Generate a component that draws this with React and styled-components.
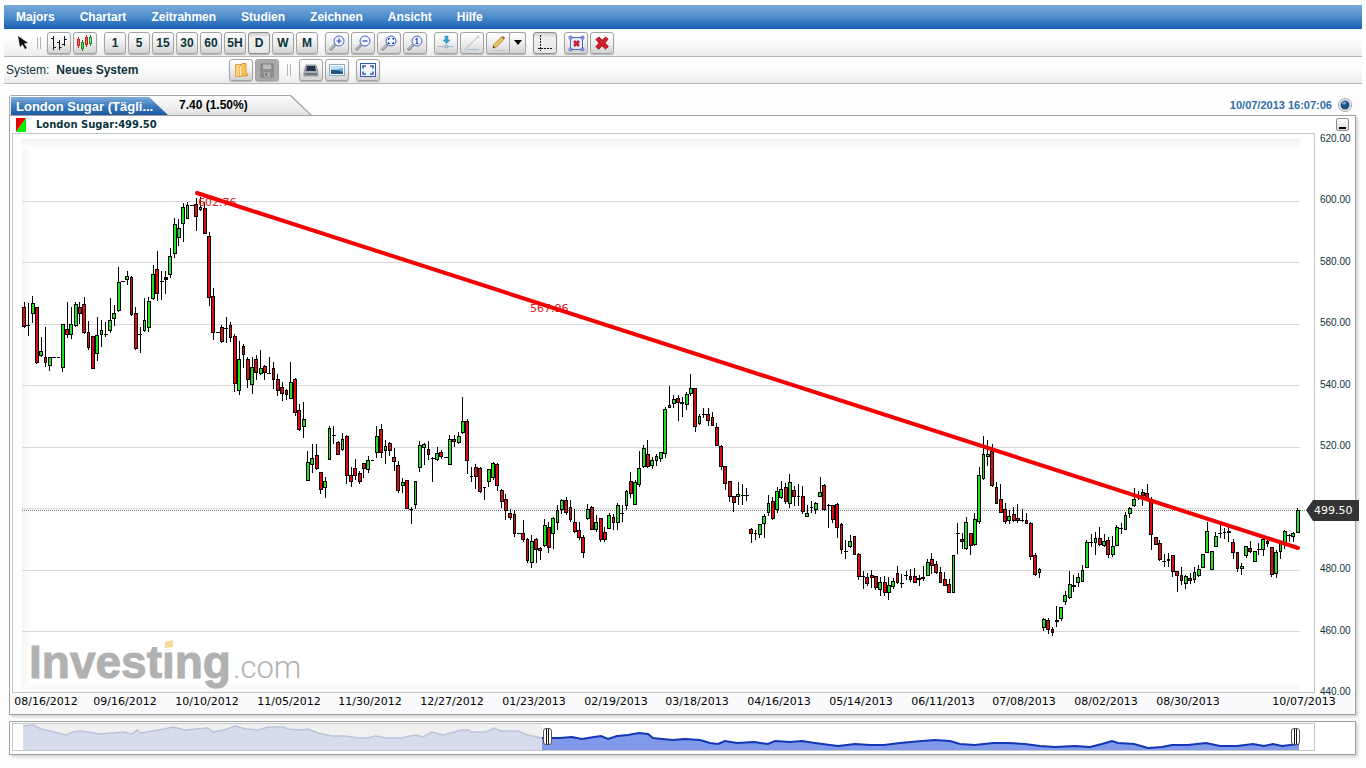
import React, { useState } from "react";
import styled, { createGlobalStyle } from "styled-components";

const GlobalStyle = createGlobalStyle`
  body {
    margin: 0;
    background: #fefefe;
    font-family: "Liberation Sans", Arial, sans-serif;
    font-size: 12px;
    color: #0b333c;
  }
  * {
    box-sizing: border-box;
  }
`;

const Page = styled.div`
  padding: 5px 4px;
`;

const Menu = styled.nav`
  display: flex;
  align-items: center;
  gap: 25px;
  height: 24px;
  padding-left: 12px;
  background: linear-gradient(#7cabda, #4d8bcb 50%, #1860b4);
`;

const MenuLink = styled.a`
  color: white;
  font-weight: bold;
  text-decoration: none;
`;

const Toolbar = styled.div`
  display: flex;
  align-items: center;
  gap: 7px;
  height: 28px;
  border-bottom: 1px solid #b5b5b5;
  background: linear-gradient(#ffffff, #fbfbfb 50%, #ececec);
`;

const SystemBar = styled(Toolbar)`
  height: 27px;
`;

const Group = styled.div`
  display: flex;
  gap: 2px;
`;

const Pointer = styled.button`
  display: flex;
  justify-content: flex-end;
  width: 26px;
  padding: 0;
  border: none;
  background: none;
`;

const Separator = styled.span`
  width: 4px;
  height: 12px;
  margin-right: -1px;
  border: 1px solid #b4b4b4;
  border-width: 0 1px;

  ${SystemBar} & {
    margin: 0 1px;
  }
`;

const ToolButton = styled.button`
  display: flex;
  align-items: center;
  justify-content: center;
  width: ${(props) => props.$width || 24}px;
  height: 22px;
  padding: 0;
  border: 1px solid ${(props) => (props.$active ? "#8d8d8d" : "#a3a3a3")};
  border-radius: 3px;
  background: ${(props) =>
    props.disabled
      ? "#a9a9a9"
      : props.$active
        ? "linear-gradient(#d2d2d2, #f0f0f0 25%, #e6e6e6)"
        : "linear-gradient(#ffffff, #eeeeee 50%, #d3d3d3)"};
  box-shadow: 0 1px 1px rgba(0, 0, 0, 0.25);
  font: bold 12px "Liberation Sans", Arial, sans-serif;
  color: #0b333c;
`;

const SplitButton = styled.div`
  display: flex;

  button:first-child {
    border-radius: 3px 0 0 3px;
  }
  button:last-child {
    border-left: none;
    border-radius: 0 3px 3px 0;
  }
`;

const SystemName = styled.div`
  display: flex;
  gap: 7px;
  width: 218px;
  padding-left: 2px;
`;

const Content = styled.main`
  margin: 11px 6px 0 5px;
`;

const TabRow = styled.div`
  display: flex;
  align-items: flex-end;
  justify-content: space-between;
  height: 20px;
`;

const TabFrame = styled.div`
  width: 303px;
  height: 20px;
  padding: 1px 1px 0;
  background: #a8a8a8;
  clip-path: polygon(0 2px, 2px 0, 282px 0, 100% 100%, 0 100%);
`;

const Tabs = styled.div`
  display: flex;
  height: 19px;
  padding: 1px 0 0 1px;
  background: linear-gradient(#fdfdfd, #e2e2e2);
  clip-path: polygon(0 0, 280px 0, 300px 100%, 0 100%);
`;

const Tab = styled.button`
  width: 157px;
  padding: 0 0 0 5px;
  border: none;
  background: linear-gradient(#7fabda, #3d7cbd 50%, #1b599f);
  clip-path: polygon(0 0, 138px 0, 100% 100%, 0 100%);
  color: white;
  font: bold 13px "Liberation Sans", Arial, sans-serif;
  text-align: left;
`;

const Change = styled.span`
  padding: 1px 0 0 11px;
  color: black;
  font-weight: bold;
`;

const Clock = styled.div`
  display: flex;
  align-items: center;
  gap: 6px;
  height: 20px;
  padding-right: 4px;
  color: #2f6ca8;
  font-size: 11px;
  font-weight: bold;
`;

const Panel = styled.section`
  border: 1px solid #a0a0a0;
  background: white;
  box-shadow: 2px 2px 3px rgba(0, 0, 0, 0.18);
`;

const ChartPanel = styled(Panel)`
  border-top: none;
`;

const Legend = styled.div`
  display: flex;
  align-items: center;
  gap: 10px;
  height: 18px;
  padding: 0 6px;
  border-top: 1px solid #a0a0a0;
  font: bold 10px "DejaVu Sans", Verdana, sans-serif;
`;

const MinimizeButton = styled.button`
  width: 13px;
  height: 13px;
  margin-left: auto;
  padding: 7px 2px 0;
  border: 1px solid #8e8e8e;
  border-radius: 2px;
  background: linear-gradient(#ffffff, #dddddd);

  &::before {
    content: "";
    display: block;
    height: 2px;
    background: black;
  }
`;

const Drawing = styled.svg`
  display: block;
  width: 100%;
  height: auto;
  overflow: visible;
`;

const Navigator = styled(Panel)`
  position: relative;
  margin-top: 6px;
`;

const Handle = styled.input`
  position: absolute;
  top: 0;
  left: 0;
  width: 100%;
  height: 28px;
  margin: 0;
  background: none;
  appearance: none;
  pointer-events: none;

  &::-webkit-slider-thumb {
    width: 9px;
    height: 17px;
    border: 1px solid #555555;
    border-radius: 3px;
    background: linear-gradient(
      to right,
      #ffffff 2px,
      #111111 2px 3px,
      #ffffff 3px 4px,
      #111111 4px 5px,
      #ffffff 5px
    );
    appearance: none;
    pointer-events: auto;
  }
`;

const menuItems = [
  "Majors",
  "Chartart",
  "Zeitrahmen",
  "Studien",
  "Zeichnen",
  "Ansicht",
  "Hilfe",
];

const periods = ["1", "5", "15", "30", "60", "5H", "D", "W", "M"];

const prices = [620, 600, 580, 560, 540, 520, 500, 480, 460, 440];

const dates = [
  [46, "08/16/2012"],
  [125, "09/16/2012"],
  [207, "10/10/2012"],
  [289, "11/05/2012"],
  [370, "11/30/2012"],
  [452, "12/27/2012"],
  [534, "01/23/2013"],
  [616, "02/19/2013"],
  [697, "03/18/2013"],
  [779, "04/16/2013"],
  [861, "05/14/2013"],
  [943, "06/11/2013"],
  [1024, "07/08/2013"],
  [1106, "08/02/2013"],
  [1188, "08/30/2013"],
  [1304, "10/07/2013"],
];

// one bar per trading day: r = falling, g = rising, d = unchanged
// then wick top, body top, body bottom, wick bottom
const bars = `
r302,307,326,327 d303,325,325,335 g296,303,313,322 r307,307,362,363 g337,351,355,356
r327,357,362,366 g357,357,365,370 d357,357,357,357 d357,357,357,357 g324,324,367,371
r302,329,334,337 g307,324,334,338 g302,304,325,326 r302,307,313,323 r297,304,332,333
r321,332,347,349 r336,336,368,368 g317,335,353,360 g320,330,334,346 d322,334,334,336
g298,320,330,332 g305,313,318,325 g267,282,310,311 d281,281,281,281 g271,276,279,284
r276,277,314,315 r307,313,348,349 d327,334,334,352 g298,320,330,331 g297,301,327,331
g265,274,298,299 r251,269,293,300 d271,281,281,299 d271,277,279,293 g248,256,274,277
g218,224,253,257 g219,228,237,245 g203,207,223,241 g202,205,218,218 d205,205,205,205
r198,204,216,230 g197,207,209,210 r202,208,233,233 r232,236,297,305 r288,296,332,339
d332,332,332,332 r325,327,341,342 d317,328,328,342 r322,325,337,341 r334,336,383,391
g341,359,390,394 r344,346,354,367 r357,359,379,387 g357,367,384,393 r355,359,372,379
g350,368,373,374 r365,366,372,379 d357,373,373,373 r362,368,379,388 r374,379,390,395
r382,387,393,400 r389,390,394,399 g362,382,398,398 r378,379,412,415 r404,410,429,430
g402,419,426,437 g451,462,480,480 g444,458,464,472 r444,455,468,469 r472,472,489,493
g477,481,487,497 g426,428,459,459 d426,435,435,443 r441,442,454,454 g433,439,449,450
r435,436,475,483 r467,475,481,486 r459,468,475,479 r471,473,481,483 r463,463,468,477
g456,460,469,472 d460,460,460,460 g426,436,452,457 r424,429,452,457 g440,446,450,463
r442,443,450,455 r448,457,461,470 r461,465,490,492 g478,482,485,492 r480,480,508,508
d507,509,509,523 g481,481,504,508 g441,445,467,471 g443,444,447,464 r441,449,454,459
d457,458,458,481 g447,453,459,460 r450,452,456,458 d457,457,457,457 g435,439,464,464
r435,439,441,446 g432,436,442,443 g397,421,432,433 r419,421,460,473 d467,476,476,481
r464,467,476,488 r467,468,491,492 d487,487,487,499 g469,469,481,486 g462,463,477,479
r463,464,485,490 r489,490,501,507 r494,499,510,519 r509,513,517,519 r510,514,533,536
d533,533,533,533 r520,533,539,541 r538,539,560,562 g535,541,562,567 r538,539,549,562
r547,548,550,559 g519,525,545,546 r522,527,547,552 g517,518,533,548 g505,510,522,529
g499,500,509,513 r497,500,512,514 r500,507,519,521 r509,522,531,532 r522,530,537,539
r535,537,552,557 g504,509,518,519 r506,507,529,529 g515,522,529,531 r518,518,539,541
r527,532,539,541 g513,515,528,528 r514,517,522,529 g503,505,522,529 d505,513,513,521
g490,491,505,509 r472,481,493,497 g480,482,504,504 g451,468,484,486 g445,448,466,467
r440,454,466,467 g457,460,465,468 g454,456,460,465 g452,452,458,461 g407,409,453,457
g386,405,407,407 g395,399,403,407 r395,398,402,420 d397,402,403,416 g392,394,404,409
g374,388,393,395 r388,388,426,431 g414,416,423,424 d408,414,414,417 r408,414,420,425
r412,417,425,425 r423,427,445,445 r445,446,466,469 r466,466,483,489 r481,481,496,501
r496,496,502,511 g482,494,496,504 d484,495,495,504 d488,495,495,500 r528,529,533,542
d530,533,533,539 g524,524,534,537 g514,516,523,537 g495,503,512,515 r497,501,518,519
g487,491,509,512 g481,489,497,498 r483,487,501,503 g474,482,503,507 r486,490,496,505
d484,496,496,505 r486,496,511,513 g505,513,516,516 d501,507,507,512 g502,503,509,513
g477,492,496,496 r484,485,509,510 d504,505,505,527 r505,505,519,522 r503,504,527,537
r523,524,549,553 d540,551,551,558 g535,541,546,547 r536,536,554,554 r553,554,576,579
d571,576,576,588 r573,577,583,585 r570,575,577,587 r576,576,587,589 g577,582,589,595
r576,582,592,595 g577,585,592,599 g578,581,586,588 r566,573,582,583 d574,583,583,587
d571,575,575,579 r569,576,579,581 r568,576,582,582 d575,578,579,585 d566,577,578,580
g559,562,575,575 r553,559,565,573 r561,564,572,573 r567,572,582,582 r572,579,585,585
r579,584,592,592 g555,555,592,592 d523,533,533,553 r533,539,541,548 g517,522,548,549
r533,533,545,554 g513,519,544,545 g467,475,521,523 g436,454,478,479 g440,454,456,465
r444,451,485,486 r482,487,503,503 r484,499,512,512 r503,509,521,523 g510,516,520,523
r507,514,520,521 r504,518,520,522 d509,520,520,521 r513,520,523,523 r522,523,556,559
r553,555,574,575 g568,569,572,577 g618,619,627,630 r618,620,629,633 r627,629,632,635
d606,620,621,626 g607,607,618,620 g591,595,601,604 g571,584,597,598 d575,585,586,591
g573,577,582,586 g565,570,581,581 g540,542,567,567 d534,542,542,546 g532,538,542,554
r527,538,544,545 g534,541,545,546 r537,540,554,557 g536,546,554,556 g525,527,545,545
d523,528,528,533 g512,515,529,529 g507,508,513,517 g488,499,505,506 d491,497,497,499
r489,492,495,505 r484,493,499,499 r497,499,534,549 r537,537,544,544 r540,543,559,560
d554,561,561,566 r553,559,560,566 r555,555,571,576 r571,571,575,591 r567,575,580,584
g575,576,583,588 r573,578,580,583 g567,572,579,582 g565,569,575,576 g554,554,567,567
g522,531,552,552 g551,551,569,569 g532,536,546,546 d523,533,533,537 d528,532,532,538
d527,531,532,541 r539,542,552,558 r552,552,568,571 g563,566,568,574 g546,546,555,557
r541,548,551,552 g551,551,561,561 d543,549,549,554 g538,539,549,555 r540,541,543,546
r547,547,574,576 g550,552,573,577 g543,543,551,558 g530,531,542,548 d534,535,535,541
g532,533,536,541 g508,510,532,532
`
  .trim()
  .split(/\s+/)
  .map((bar) => [bar[0], ...bar.slice(1).split(",").map(Number)]);

const barColors = { r: "#dc0c10", g: "#1fe022", d: "#222222" };

const oldHistory =
  "23,726 33,725 41,729 50,731 58,733 66,735 73,732 80,731 88,732 100,734 112,733 124,732 132,734 137,730 141,733 152,731 164,729 173,727 185,730 196,729 208,728 213,732 224,730 235,726 246,729 258,730 268,727 283,727 288,729 300,730 308,729 318,733 332,736 345,736 358,738 367,738 376,736 386,738 402,738 410,736 416,735 423,737 432,732 443,735 454,732 462,730 469,730 471,732 486,732 494,728 501,731 518,731 528,735 542,738";
const newHistory =
  "542,738 560,738 572,737 582,739 594,737 601,736 608,739 617,736 628,735 639,733 648,734 653,738 662,739 673,740 685,739 700,740 710,743 718,744 725,741 737,743 754,742 768,744 775,741 790,742 802,741 815,743 830,745 838,746 855,744 870,745 884,745 900,743 922,741 935,740 950,741 960,744 975,745 993,743 1008,743 1025,744 1040,746 1055,747 1075,746 1090,747 1102,744 1112,741 1118,743 1134,744 1148,748 1162,747 1172,745 1188,745 1206,743 1220,746 1237,746 1253,744 1264,746 1273,744 1282,746 1299,744";

const Magnifier = ({ children }) => (
  <svg width="18" height="18" viewBox="0 0 18 18" fill="none">
    <path d="M2 16L7.500 10.500" stroke="#8a8f98" strokeWidth="3" />
    <path d="M2.500 15L7 10.500" stroke="#e2e4e8" />
    <circle cx="11" cy="7" r="5" fill="#f2f6ff" stroke="#4763bd" />
    <g stroke="#2c4bb5" strokeWidth="1.200">
      {children}
    </g>
  </svg>
);

const BarsIcon = () => (
  <svg width="18" height="18" viewBox="0 0 18 18">
    <path
      d="M3.500 2v14M1 4.500h2.500M3.500 13.500H6M9.500 6v10M7 8.500h2.500M9.500 13.500h2M14.500 2v10M12 10.500h2.500M14.500 5.500H17"
      fill="none"
      stroke="#111111"
    />
  </svg>
);

const CandlesIcon = () => (
  <svg width="18" height="18" viewBox="0 0 18 18" strokeWidth="1">
    <path d="M2.500 3v11M10.500 1v12" stroke="#c22020" />
    <path d="M6.500 6v11M14.500 1v11" stroke="#16851c" />
    <rect x="1.500" y="5.500" width="2" height="6" fill="#f36464" stroke="#d52222" />
    <rect x="5.500" y="8.500" width="2" height="6" fill="#40df45" stroke="#188f20" />
    <rect x="9.500" y="3.500" width="2" height="7" fill="#f36464" stroke="#c22020" />
    <rect x="13.500" y="3.500" width="2" height="6" fill="#a3eba0" stroke="#188f20" />
  </svg>
);

const CursorIcon = () => (
  <svg width="13" height="15" viewBox="0 0 13 15">
    <path d="M1 1L11 8L7 8.500L10 13L8 14L5.500 9.500L3 12Z" fill="#111111" />
  </svg>
);

const ArrowDownIcon = () => (
  <svg width="18" height="18" viewBox="0 0 18 18">
    <path d="M8 2h3v4h2L9.500 9.500 6 6h2z" fill="#37a4d8" stroke="#2382b5" strokeWidth=".5" />
    <path d="M1 12.500h16" stroke="#a9bccb" />
    <circle cx="9.500" cy="12.500" r="1.500" fill="#dbe6ee" stroke="#7d9bb2" />
  </svg>
);

const LineIcon = () => (
  <svg width="18" height="18" viewBox="0 0 18 18">
    <path d="M3 14.500L15 3M4 15.500h12" stroke="#a9bacb" />
    <circle cx="3" cy="15" r="1.500" fill="#c3d1de" />
    <circle cx="15" cy="3" r="1.500" fill="#c3d1de" />
  </svg>
);

const PencilIcon = () => (
  <svg width="18" height="18" viewBox="0 0 18 18">
    <path d="M5 16.500h11" stroke="#c1c1c1" />
    <path d="M4 14l1-3.500L12.500 3l2.500 2.200L7.500 13z" fill="#edc65b" stroke="#9b762c" strokeWidth=".8" />
    <path d="M12.500 3L14 2l2 1.800-1 1.400z" fill="#a65f45" />
    <path d="M4 14l.5-2 1.500 1.400z" fill="#222222" />
  </svg>
);

const AxisIcon = () => (
  <svg width="18" height="18" viewBox="0 0 18 18" stroke="#111111" strokeDasharray="2 1">
    <path d="M4.500 1v16" />
    <path d="M2 14.500h15" />
  </svg>
);

const Cross = () => (
  <svg width="18" height="18" viewBox="0 0 18 18">
    <path
      d="M3 5.500L6 3l3.200 3.500L12.500 3 15 5.200 11.800 9l3.500 3.500L12.500 15 9 11.800 5.500 15.200 3 12.500 6.200 9z"
      fill="#d21f2b"
      stroke="#9c1016"
    />
  </svg>
);

const ClearIcon = () => (
  <svg width="18" height="18" viewBox="0 0 18 18">
    <rect x="3.500" y="3.500" width="12" height="12" fill="#e8ecfb" stroke="#4666c7" />
    <path
      d="M2 2h3v3H2zM14 2h3v3h-3zM2 14h3v3H2zM14 14h3v3h-3z"
      fill="#8ea2df"
      stroke="#4666c7"
      strokeWidth=".5"
    />
    <path d="M7 7l5 5M12 7l-5 5" stroke="#c51f2b" strokeWidth="2.500" />
  </svg>
);

const FolderIcon = () => (
  <svg width="18" height="18" viewBox="0 0 18 18">
    <path d="M3.500 3.500h6v12h-6z" fill="#fbd58a" stroke="#dba23e" />
    <path d="M8 5l2-2.500h4v10.500h2l-1 2H8z" fill="#f8c361" stroke="#d99a31" />
    <path d="M8.500 5v10" stroke="#fff1cd" />
  </svg>
);

const SaveIcon = () => (
  <svg width="18" height="18" viewBox="0 0 18 18">
    <path d="M3 3h12v13H3z" fill="#909090" stroke="#7d7d7d" />
    <path d="M5 3.500h8V8H5z" fill="#bcbcbc" />
    <path d="M6 11h6v5H6z" fill="#ababab" />
    <path d="M7 12h2v3H7z" fill="#7d7d7d" />
  </svg>
);

const PrintIcon = () => (
  <svg width="18" height="18" viewBox="0 0 18 18">
    <path d="M4 4h10l2 7v4H2v-4z" fill="#a9afb8" stroke="#777d87" strokeWidth=".7" />
    <path d="M5 5h8l1 5H4z" fill="#26334a" />
    <path d="M3 12h12v2H3z" fill="#6d747f" />
  </svg>
);

const PictureIcon = () => (
  <svg width="18" height="18" viewBox="0 0 18 18">
    <rect x="1.500" y="3.500" width="15" height="11" fill="#ffffff" stroke="#8eacc2" />
    <path d="M3 5h12v8H3z" fill="#65aadd" />
    <path d="M3 5h12v2L3 10z" fill="#b7e1f5" />
    <path d="M3 9q5-1 12 2v2H3z" fill="#225581" />
  </svg>
);

const FullscreenIcon = () => (
  <svg width="18" height="18" viewBox="0 0 18 18" fill="none" stroke="#3558b5">
    <rect x="1.500" y="2.500" width="15" height="13" fill="#f6f8ff" />
    <path d="M4 7.500V5h3M11 5h3v2.500M14 10.500V13h-3M7 13H4v-2.500" strokeWidth="1.500" />
  </svg>
);

const Candle = ({ bar, center }) => {
  const [kind, high, top, bottom, low] = bar;
  const left = Math.round(center - 1.9);
  const width = Math.round(center + 1.9) - left;
  const hollow = kind !== "d" && bottom - top > 1;

  return (
    <g>
      {low > high && (
        <rect x={Math.round(center - 0.5)} y={high} width="1" height={low - high + 1} />
      )}
      <rect x={left} y={top} width={width} height={bottom - top + 1} />
      {hollow && (
        <rect
          x={left + 1}
          y={top + 1}
          width={width - 2}
          height={bottom - top - 1}
          fill={barColors[kind]}
        />
      )}
    </g>
  );
};

const Chart = () => (
  <Drawing viewBox="10 133 1345 581" role="img" aria-label="London Sugar">
    <defs>
      <linearGradient id="topShade" x2="0" y2="1">
        <stop stopColor="#f1f1f1" />
        <stop offset="1" stopColor="#ffffff" />
      </linearGradient>
      <linearGradient id="sideShade">
        <stop stopColor="#f5f5f5" />
        <stop offset="1" stopColor="#ffffff" />
      </linearGradient>
    </defs>
    <g shapeRendering="crispEdges">
      <rect x="10" y="693" width="1345" height="21" fill="#fafafd" />
      <rect x="22" y="140" width="10" height="552" fill="url(#sideShade)" />
      <rect x="22" y="139" width="1278" height="10" fill="url(#topShade)" />
      <rect x="22" y="684" width="1278" height="8" fill="#fafafa" />
      <rect x="12.500" y="133.500" width="1302" height="559" fill="none" stroke="#c3c7c7" />
      {prices.slice(1, -1).map((price, i) => (
        <path
          key={price}
          d={`M22 ${Math.round(201 + i * 61.45) + 0.5}H1300`}
          stroke="#d8d8d8"
        />
      ))}
      <path d="M22 510.500H1308" stroke="#777777" strokeDasharray="1 1" />
    </g>

    <g fill="#b1b1b1">
      <text
        x="29"
        y="678"
        fontFamily="Liberation Sans"
        fontSize="46"
        fontWeight="bold"
        stroke="#b1b1b1"
        strokeWidth="1"
      >
        Investing
      </text>
      <text x="233" y="678" fontFamily="Roboto" fontSize="31" fontWeight="300">
        .com
      </text>
      <path d="M163 639h12v10h-12z" fill="#ffffff" />
      <path d="M165 642l8-2v7l-8 1z" fill="#fbd699" />
    </g>

    {bars.map((bar, i) => (
      <Candle key={i} bar={bar} center={24 + i * 4.303} />
    ))}

    <g fontFamily="DejaVu Sans" fontSize="11" fill="#e02020">
      <text x="198" y="206">602.76</text>
      <text x="530" y="312">567.96</text>
    </g>
    <path d="M197 193L1298 548" stroke="#f50000" strokeWidth="4" strokeLinecap="round" />

    <g fontFamily="Liberation Sans" fontSize="10" fill="#0b333c">
      {prices.map(
        (price, i) =>
          // the last price tag sits on the 500 label
          price !== 500 && (
            <text key={price} x="1320" y={Math.round(142 + i * 61.45)}>
              {price}.00
            </text>
          )
      )}
    </g>
    <g fontFamily="DejaVu Sans" fontSize="11" textAnchor="middle">
      {dates.map(([x, date]) => (
        <text key={date} x={x} y="705">
          {date}
        </text>
      ))}
    </g>
    <path d="M1306 510l7-10h46v21h-46z" fill="#333333" />
    <text x="1314" y="514" fontFamily="DejaVu Sans" fontSize="11" fill="#ffffff">
      499.50
    </text>
  </Drawing>
);

const App = () => {
  const [period, setPeriod] = useState("D");
  const [from, setFrom] = useState(533);
  const [to, setTo] = useState(1281);

  return (
    <Page>
      <GlobalStyle />
      <Menu>
        {menuItems.map((item) => (
          <MenuLink key={item} href="#">
            {item}
          </MenuLink>
        ))}
      </Menu>
      <Toolbar>
        <Pointer aria-label="Cursor">
          <CursorIcon />
        </Pointer>
        <Separator />
        <Group>
          <ToolButton aria-label="Balken">
            <BarsIcon />
          </ToolButton>
          <ToolButton aria-label="Kerzen">
            <CandlesIcon />
          </ToolButton>
        </Group>
        <Group>
          {periods.map((item) => (
            <ToolButton
              key={item}
              $width={22}
              $active={item === period}
              onClick={() => setPeriod(item)}
            >
              {item}
            </ToolButton>
          ))}
        </Group>
        <Group>
          <ToolButton aria-label="Vergrößern">
            <Magnifier>
              <path d="M8.500 7h5M11 4.500v5" />
            </Magnifier>
          </ToolButton>
          <ToolButton aria-label="Verkleinern">
            <Magnifier>
              <path d="M8.500 7h5" />
            </Magnifier>
          </ToolButton>
          <ToolButton aria-label="Bereich">
            <Magnifier>
              <path d="M8.500 6V4.500H10M12 4.500h1.500V6M13.500 8v1.500H12M10 9.500H8.500V8" />
            </Magnifier>
          </ToolButton>
          <ToolButton aria-label="Originalgröße">
            <Magnifier>
              <path d="M9.500 5.500L11 4.500V9.500M9.500 9.500h3" />
            </Magnifier>
          </ToolButton>
        </Group>
        <Group>
          <ToolButton aria-label="Einrasten">
            <ArrowDownIcon />
          </ToolButton>
          <ToolButton aria-label="Linie">
            <LineIcon />
          </ToolButton>
          <SplitButton>
            <ToolButton aria-label="Stift">
              <PencilIcon />
            </ToolButton>
            <ToolButton aria-label="Stift wählen" $width={16}>
              <svg width="8" height="5" viewBox="0 0 8 5">
                <path d="M0 0h8L4 5z" />
              </svg>
            </ToolButton>
          </SplitButton>
        </Group>
        <Group>
          <ToolButton aria-label="Achsen" $active>
            <AxisIcon />
          </ToolButton>
        </Group>
        <Group>
          <ToolButton aria-label="Alle entfernen">
            <ClearIcon />
          </ToolButton>
          <ToolButton aria-label="Entfernen">
            <Cross />
          </ToolButton>
        </Group>
      </Toolbar>
      <SystemBar>
        <SystemName>
          <span>System:</span>
          <b>Neues System</b>
        </SystemName>
        <Group>
          <ToolButton aria-label="Öffnen">
            <FolderIcon />
          </ToolButton>
          <ToolButton aria-label="Speichern" disabled>
            <SaveIcon />
          </ToolButton>
        </Group>
        <Separator />
        <Group>
          <ToolButton aria-label="Drucken">
            <PrintIcon />
          </ToolButton>
          <ToolButton aria-label="Bild">
            <PictureIcon />
          </ToolButton>
        </Group>
        <ToolButton aria-label="Vollbild">
          <FullscreenIcon />
        </ToolButton>
      </SystemBar>

      <Content>
        <TabRow>
          <TabFrame>
            <Tabs>
              <Tab>London Sugar (Tägli...</Tab>
              <Change>7.40 (1.50%)</Change>
            </Tabs>
          </TabFrame>
          <Clock>
            <span>10/07/2013 16:07:06</span>
            <svg width="14" height="14" viewBox="0 0 14 14">
              <circle cx="7" cy="7" r="6.500" fill="#eeeeee" stroke="#a5a5a5" />
              <circle cx="7" cy="7" r="4.500" fill="#1f4f83" />
              <ellipse cx="6" cy="5" rx="2.500" ry="1.800" fill="#6c9ccb" />
            </svg>
          </Clock>
        </TabRow>
        <ChartPanel>
          <Legend>
            <svg width="10" height="14" viewBox="0 0 10 14">
              <path d="M0 0h10L0 14z" fill="#ee0000" />
              <path d="M10 0v14H0z" fill="#00ee00" />
            </svg>
            London Sugar:499.50
            <MinimizeButton aria-label="Minimieren" />
          </Legend>
          <Chart />
        </ChartPanel>
        <Navigator>
          <Drawing viewBox="10 722 1345 32">
            <rect x="12.500" y="723.500" width="1302" height="27" fill="#ffffff" stroke="#c3c7c7" />
            <rect x="23" y="724" width="519" height="26" fill="#f0f0f0" />
            <polygon points={`23,750 ${oldHistory} 542,750`} fill="#d6dcec" />
            <polyline points={oldHistory} fill="none" stroke="#bcc4dc" strokeWidth="1.500" />
            <polygon points={`542,750 ${newHistory} 1299,750`} fill="#8099ea" />
            <polyline points={newHistory} fill="none" stroke="#1236b4" strokeWidth="2" />
          </Drawing>
          <Handle
            type="range"
            aria-label="Von"
            min="0"
            max="1336"
            value={from}
            onChange={(e) => setFrom(Number(e.target.value))}
          />
          <Handle
            type="range"
            aria-label="Bis"
            min="0"
            max="1336"
            value={to}
            onChange={(e) => setTo(Number(e.target.value))}
          />
        </Navigator>
      </Content>
    </Page>
  );
};

export default App;
